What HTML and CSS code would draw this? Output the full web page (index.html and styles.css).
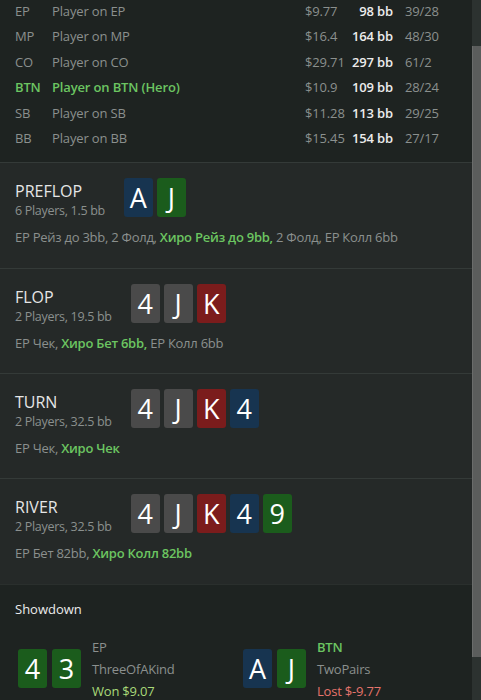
FILE: index.html
```html
<!DOCTYPE html>
<html lang="ru">
<head>
    <meta charset="UTF-8">
    <meta name="viewport" content="width=device-width, initial-scale=1.0">
    <title>Hand History</title>
    <link rel="stylesheet" href="styles.css">
</head>
<body>
    <div class="window">
        <main class="hand">
            <section class="players">
                <div class="player">
                    <span class="pos">EP</span><span class="name">Player on EP</span>
                    <span class="money">$9.77</span><span class="stack">98 bb</span><span class="stat">39/28</span>
                </div>
                <div class="player">
                    <span class="pos">MP</span><span class="name">Player on MP</span>
                    <span class="money">$16.4</span><span class="stack">164 bb</span><span class="stat">48/30</span>
                </div>
                <div class="player">
                    <span class="pos">CO</span><span class="name">Player on CO</span>
                    <span class="money">$29.71</span><span class="stack">297 bb</span><span class="stat">61/2</span>
                </div>
                <div class="player hero">
                    <span class="pos">BTN</span><span class="name">Player on BTN (Hero)</span>
                    <span class="money">$10.9</span><span class="stack">109 bb</span><span class="stat">28/24</span>
                </div>
                <div class="player">
                    <span class="pos">SB</span><span class="name">Player on SB</span>
                    <span class="money">$11.28</span><span class="stack">113 bb</span><span class="stat">29/25</span>
                </div>
                <div class="player">
                    <span class="pos">BB</span><span class="name">Player on BB</span>
                    <span class="money">$15.45</span><span class="stack">154 bb</span><span class="stat">27/17</span>
                </div>
            </section>

            <section class="street">
                <div class="street-head">
                    <div class="street-info">
                        <div class="street-title">PREFLOP</div>
                        <div class="street-sub">6 Players, 1.5 bb</div>
                    </div>
                    <div class="cards">
                        <span class="card blue">A</span>
                        <span class="card green">J</span>
                    </div>
                </div>
                <div class="actions">EP Рейз до 3bb, 2 Фолд, <b class="me">Хиро Рейз до 9bb,</b> 2 Фолд, EP Колл 6bb</div>
            </section>

            <section class="street">
                <div class="street-head">
                    <div class="street-info">
                        <div class="street-title">FLOP</div>
                        <div class="street-sub">2 Players, 19.5 bb</div>
                    </div>
                    <div class="cards">
                        <span class="card gray">4</span>
                        <span class="card gray">J</span>
                        <span class="card red">K</span>
                    </div>
                </div>
                <div class="actions">EP Чек, <b class="me">Хиро Бет 6bb,</b> EP Колл 6bb</div>
            </section>

            <section class="street">
                <div class="street-head">
                    <div class="street-info">
                        <div class="street-title">TURN</div>
                        <div class="street-sub">2 Players, 32.5 bb</div>
                    </div>
                    <div class="cards">
                        <span class="card gray">4</span>
                        <span class="card gray">J</span>
                        <span class="card red">K</span>
                        <span class="card blue">4</span>
                    </div>
                </div>
                <div class="actions">EP Чек, <b class="me">Хиро Чек</b></div>
            </section>

            <section class="street">
                <div class="street-head">
                    <div class="street-info">
                        <div class="street-title">RIVER</div>
                        <div class="street-sub">2 Players, 32.5 bb</div>
                    </div>
                    <div class="cards">
                        <span class="card gray">4</span>
                        <span class="card gray">J</span>
                        <span class="card red">K</span>
                        <span class="card blue">4</span>
                        <span class="card green">9</span>
                    </div>
                </div>
                <div class="actions">EP Бет 82bb, <b class="me">Хиро Колл 82bb</b></div>
            </section>

            <section class="showdown">
                <div class="showdown-title">Showdown</div>
                <div class="showdown-hands">
                    <div class="shown">
                        <div class="cards">
                            <span class="card green">4</span>
                            <span class="card green">3</span>
                        </div>
                        <div class="shown-info">
                            <div>EP</div>
                            <div>ThreeOfAKind</div>
                            <div class="won">Won $9.07</div>
                        </div>
                    </div>
                    <div class="shown">
                        <div class="cards">
                            <span class="card blue">A</span>
                            <span class="card green">J</span>
                        </div>
                        <div class="shown-info">
                            <div class="me">BTN</div>
                            <div>TwoPairs</div>
                            <div class="lost">Lost $-9.77</div>
                        </div>
                    </div>
                </div>
            </section>
        </main>

        <div class="scrollbar"><div class="thumb"></div></div>
    </div>
</body>
</html>
```

FILE: styles.css
```css
body {
    margin: 0;
    background: #1e2321;
    font-family: "Open Sans", "Noto Sans", sans-serif;
    color: #8b908e;
    overflow: hidden;
}

.window {
    display: flex;
    height: 700px;
    overflow: hidden;
}

.hand {
    flex: 1;
    min-width: 0;
}

/* players table */
.players {
    padding: 0 0 11px 15px;
    margin-top: -1px;
}
.player {
    display: grid;
    grid-template-columns: 37px 253px 45px 43px auto;
    height: 25.4px;
    line-height: 25.4px;
    font-size: 13px;
    letter-spacing: -0.15px;
    white-space: nowrap;
}
.player .stack {
    color: #ececec;
    font-weight: 600;
    text-align: right;
}
.player .stat {
    padding-left: 12px;
}
.player.hero .pos,
.player.hero .name {
    color: #6cc561;
    font-weight: 600;
}

/* streets */
.street {
    background: #252928;
    border-top: 1px solid #343a38;
    padding: 15px 15px 0;
    height: 105.3px;
    box-sizing: border-box;
}
.street-head {
    display: flex;
    align-items: flex-start;
    gap: 19px;
}
.street-title {
    color: #e6e6e6;
    font-size: 16px;
    line-height: 21px;
    margin-top: 3px;
}
.street-sub {
    font-size: 12.5px;
    letter-spacing: -0.3px;
    line-height: 18px;
}
.actions {
    font-size: 13px;
    letter-spacing: -0.25px;
    margin-top: 8px;
    white-space: nowrap;
}
.me {
    color: #6cc561;
    font-weight: 600;
}

.cards {
    display: flex;
    gap: 4px;
}
.card {
    width: 29px;
    height: 39px;
    border-radius: 3px;
    color: #fff;
    font-size: 27px;
    line-height: 39px;
    text-align: center;
    letter-spacing: 0;
}
.card.blue { background: #173450; }
.card.green { background: #1b5c1c; }
.card.gray { background: #4a4a4a; }
.card.red { background: #7b1c1c; }

/* showdown */
.showdown {
    border-top: 1px solid #2a2f2d;
    padding: 14px 15px 0;
}
.showdown-title {
    color: #ececec;
    font-size: 13px;
    line-height: 20px;
}
.showdown-hands {
    display: grid;
    grid-template-columns: 225px 225px;
    margin-top: 17px;
    padding-left: 3px;
}
.shown {
    display: flex;
    align-items: center;
    gap: 11px;
}
.shown .cards {
    gap: 5px;
}
.shown-info {
    font-size: 13px;
    letter-spacing: -0.2px;
    line-height: 22px;
}
.won { color: #a9da79; }
.lost { color: #e5746c; }

/* scrollbar */
.scrollbar {
    width: 9px;
    background: #2c3230;
    padding-top: 46px;
    box-sizing: border-box;
}
.thumb {
    height: 611px;
    background: #5b5d5c;
    border-left: 1px solid #6a6c6b;
}
```
